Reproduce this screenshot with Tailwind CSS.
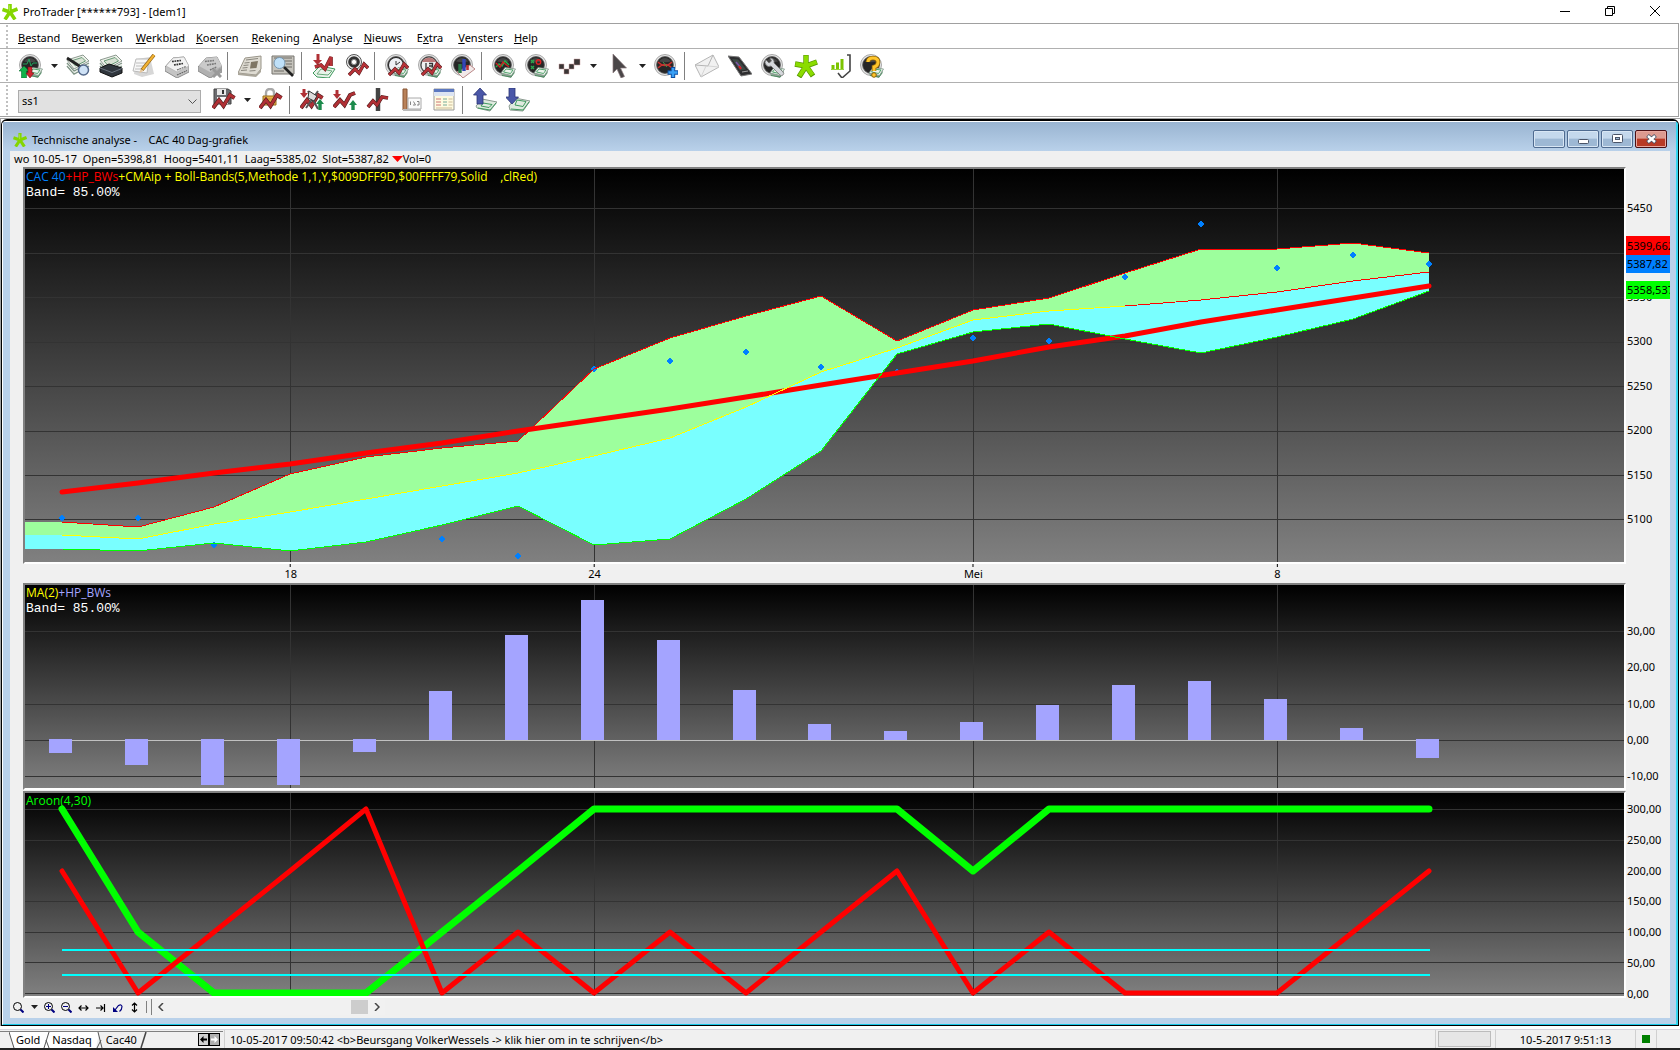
<!DOCTYPE html>
<html lang="nl">
<head>
<meta charset="utf-8">
<title>ProTrader [******793] - [dem1]</title>
<script src="https://cdn.jsdelivr.net/npm/@tailwindcss/browser@4"></script>
</head>
<body class="h-screen overflow-hidden bg-white font-['Noto_Sans','Open_Sans',sans-serif] text-[11px] leading-4 text-black">

<!-- shared icon parts -->
<svg class="hidden" aria-hidden="true">
  <symbol id="star" viewBox="0 0 16 16"><g stroke="#84d600" stroke-width="3.600" fill="none"><path d="M8 8V0M8 8L.5 5.500M8 8L3 15.500M8 8L13 15.500M8 8L15.500 5"/></g><path d="M7.500 1.500V7" stroke="#a8e840"/></symbol>
  <symbol id="orb" viewBox="0 0 24 24"><circle cx="11" cy="11" r="10.500" fill="#e4e4e4" stroke="#a8a8a8"/><circle cx="11" cy="11" r="8.400" fill="#262626" stroke="#555" stroke-width=".8"/><path d="M5 7.500a7 7 0 0 1 12 0q-5.500 1.500-12 0" fill="#454545"/></symbol>
  <symbol id="cash" viewBox="0 0 24 24"><path d="M9 21l4-6 10 2-4 7z" fill="#8fa596"/><path d="M9 19l4-5.500 10.500 1.500-4 6.500z" fill="#eef5ee" stroke="#7d9486" stroke-width=".8"/><path d="M11.500 18l2.500-3 7 1-2.500 3.500z" fill="none" stroke="#3f9a5e" stroke-width=".9"/><path d="M10 21.500l9 1.500 3.500-4.500" fill="none" stroke="#4b8a60"/></symbol>
  <symbol id="stack" viewBox="0 0 24 24"><path d="M1 6l16-5 6 6-15 8z" fill="#eef1ea" stroke="#8d9a90"/><path d="M5 7l11-3.500 3.500 3.500-10 5z" fill="#d9e2d4" stroke="#6a9a78"/><path d="M1 9l7 8 15-8M1 12l7 8 15-8" stroke="#7f9486" stroke-width="1.400" fill="none"/><path d="M1 10.500l7 8 15-8" stroke="#e6ece4" fill="none"/></symbol>
  <symbol id="zig" viewBox="0 0 24 24"><path d="M1 20l6-8 4.500 6L18 7l4.500 3" fill="none" stroke="#4a1a1a" stroke-width="4"/><path d="M1 20l6-8 4.500 6L18 7l4.500 3" fill="none" stroke="#b03035" stroke-width="2.800"/></symbol>
  <symbol id="zigs" viewBox="0 0 24 24"><path d="M4 21l6-6 4 4 5-9 4 4" fill="none" stroke="#531d1d" stroke-width="3.400"/><path d="M4 21l6-6 4 4 5-9 4 4" fill="none" stroke="#b83238" stroke-width="2.400"/></symbol>

  <symbol id="i-account" viewBox="0 0 24 24"><use href="#orb"/><path d="M4 10h4l2-5 2 7 2-3h4" stroke="#21a05c" fill="none"/><use href="#cash"/><path d="M5 12l5 5H7.500v7h-5v-7H0z" fill="#12b24a" stroke="#0a7030" stroke-width=".6"/><path d="M11 24l-4-5h2v-6h4v6h2z" fill="#d12430" stroke="#771018" stroke-width=".6"/></symbol>
  <symbol id="i-searchcash" viewBox="0 0 24 24"><use href="#stack"/><path d="M1 4l14 9" stroke="#222" stroke-width="2.800"/><circle cx="17.500" cy="16" r="5" fill="#cfe2f6" stroke="#53688a" stroke-width="1.500"/></symbol>
  <symbol id="i-case" viewBox="0 0 24 24"><use href="#stack"/><path d="M1 14l9-4 13 4v5l-10 4-12-5z" fill="#30363d" stroke="#111"/><path d="M1 14l12 4.500 10-4" stroke="#6c7580" fill="none"/></symbol>
  <symbol id="i-edit" viewBox="0 0 24 24"><path d="M2 20l2-15 14-2 4 17-12 3z" fill="#d7d7d7"/><path d="M1 17l3-12 13 0-2 14z" fill="#f7f7f7" stroke="#bbb"/><path d="M4 9h10M4 12h8M3 15h9" stroke="#bdbdbd"/><path d="M22 1L10 16" stroke="#8a5e14" stroke-width="3.600"/><path d="M22 1L10.500 15.500" stroke="#f2b233" stroke-width="2.200"/><path d="M7.500 19l1-4 3 2z" fill="#e8c79a"/></symbol>
  <symbol id="i-buysell" viewBox="0 0 24 24"><path d="M0 13l8-9 11-1 5 10v5l-12 6-12-7z" fill="#c4c4c4" stroke="#8c8c8c"/><path d="M1 12l7-8 11-1 5 9-12 6z" fill="#f2f2f2" stroke="#aaa" stroke-width=".6"/><path d="M7 7.500l9-1M9 11l9-1.500" stroke="#333" stroke-width="1.700" stroke-dasharray="1.800 .7"/><path d="M12 16l9-3.500M12 21l10-4.500" stroke="#666" stroke-width="1.200" stroke-dasharray="1.800 .7"/></symbol>
  <symbol id="i-buysellx" viewBox="0 0 24 24"><path d="M0 13l8-9 11-1 5 10v5l-12 6-12-7z" fill="#b0b0b0" stroke="#8c8c8c"/><path d="M1 12l7-8 11-1 5 9-12 6z" fill="#cacaca"/><path d="M7 7.500l9-1M9 11l9-1.500M12 16l7-3" stroke="#777" stroke-width="1.600" stroke-dasharray="1.800 .7"/><path d="M15 15l8 8M23 15l-8 8" stroke="#999" stroke-width="3"/></symbol>
  <symbol id="i-news" viewBox="0 0 24 24"><path d="M0 19l7-15 16-2v13l-5 6z" fill="#dedbd2" stroke="#989488"/><path d="M0 19l18 2 5-6v3l-5 5-18-2z" fill="#aaa69a"/><path d="M8 6l12-1.500M6.500 9l5-.5M5.500 11.500l5-.5M4.500 14l5-.5M3 16.500l6-.5" stroke="#8a877e"/><path d="M13 8l7-1-1.500 7-6.500.5z" fill="#7f7664"/><path d="M11.500 17l6-.5" stroke="#8a877e"/></symbol>
  <symbol id="i-newssearch" viewBox="0 0 24 24"><path d="M1 20V2h22v18z" fill="#c6c4bd" stroke="#77756f"/><path d="M3 4h18M14 7h7M15 10h6M15 13h6M3 17h10" stroke="#6f6d66"/><circle cx="8.500" cy="9" r="5.500" fill="#bfe0f8" stroke="#7795ad"/><path d="M13 13l9 9" stroke="#222" stroke-width="2.600"/></symbol>
  <symbol id="i-zigcash" viewBox="0 0 24 24"><path d="M1 19l7-7 15 3-6 9-12-1z" fill="#e9f3ea" stroke="#3f9a5e"/><path d="M5 20l4-5 11 2-4 4z" fill="none" stroke="#6aaa7c"/><path d="M6 0v7" stroke="#b03035" stroke-width="3"/><path d="M1 6h9l-4.500 5z" fill="#b03035"/><path d="M3 13l6-2 4 4 6-12v9" fill="none" stroke="#6a2020" stroke-width="3.600"/><path d="M3 13l6-2 4 4 6-12v9" fill="none" stroke="#b83238" stroke-width="2.600"/></symbol>
  <symbol id="i-speaker" viewBox="0 0 24 24"><circle cx="9" cy="8" r="7.500" fill="#eee" stroke="#555"/><circle cx="9" cy="8" r="5.800" fill="#333"/><circle cx="9" cy="8" r="2.600" fill="#fff" stroke="#888"/><use href="#zigs"/></symbol>
  <symbol id="i-clock" viewBox="0 0 24 24"><use href="#orb"/><circle cx="11" cy="11" r="7" fill="#eef0f4"/><path d="M11 11l4-3M11 11V7" stroke="#333"/><use href="#cash"/><use href="#zigs"/></symbol>
  <symbol id="i-date" viewBox="0 0 24 24"><use href="#orb"/><circle cx="11" cy="11" r="7.500" fill="#f0f0f0"/><path d="M4 8a8 8 0 0 1 14 0z" fill="#b87878"/><path d="M8 9v6M11 9.500h3.500v2.500h-3.500M14.500 9v6" stroke="#333" fill="none" stroke-width="1.300"/><use href="#cash"/><use href="#zigs"/></symbol>
  <symbol id="i-bars3d" viewBox="0 0 24 24"><use href="#orb"/><path d="M6 18l6 6 12-9-5-4z" fill="#f2e9e9" stroke="#b88"/><path d="M9 10v9" stroke="#2b7a49" stroke-width="3.400"/><path d="M13 5v12" stroke="#3346b8" stroke-width="3.400"/><path d="M16.500 11v5" stroke="#b83238" stroke-width="2.600"/></symbol>
  <symbol id="i-orbzig" viewBox="0 0 24 24"><use href="#orb"/><path d="M4 13l3-3 3 2 3-5 4 4" stroke="#24b24c" fill="none" stroke-width="1.400"/><path d="M4 9l4 4 3-5 6 5" stroke="#c22" fill="none" stroke-width="1.400"/><use href="#cash"/></symbol>
  <symbol id="i-orbdots" viewBox="0 0 24 24"><use href="#orb"/><circle cx="13.500" cy="8" r="2.200" fill="none" stroke="#d22" stroke-width="1.400"/><path d="M6 6l3 3M9 6L6 9M6 12l3 3M9 12l-3 3" stroke="#28a84e" stroke-width="1.400"/><use href="#cash"/></symbol>
  <symbol id="i-steps" viewBox="0 0 24 24"><g fill="#3a3535" stroke="#c9a0a0" stroke-width=".5"><path d="M1 10h5v5H1zM6 15h5v5H6zM11 10h5v5h-5zM16 5h6v6h-6z"/></g></symbol>
  <symbol id="i-cursor" viewBox="0 0 24 24"><path d="M6 0v19l4-4 4 9 3.500-1.500-4-8.500h6z" fill="#4a4648" stroke="#8d7d80" stroke-width=".7"/></symbol>
  <symbol id="i-orbplus" viewBox="0 0 24 24"><use href="#orb"/><path d="M4 8q7 7 14 0M4 14q7-7 14 0" stroke="#c8302f" fill="none" stroke-width="1.400"/><path d="M9 8l4 5" stroke="#3a9a50"/><path d="M19 13v11M13.500 18.500h11" stroke="#0d4ca0" stroke-width="4.400"/><path d="M19 14v9M14.500 18.500h9" stroke="#39a0f5" stroke-width="2.600"/></symbol>
  <symbol id="i-mail" viewBox="0 0 24 24"><path d="M0 11L18 1l6 12L6 23z" fill="#f1f1f1" stroke="#b5b5b5"/><path d="M0 11l13 1L18 1" fill="none" stroke="#b5b5b5"/><path d="M6 23l5-11M24 13l-11-1" stroke="#d5d5d5"/></symbol>
  <symbol id="i-phone" viewBox="0 0 24 24"><path d="M0 2l11 1 13 17-11 2z" fill="#2e2e30" stroke="#777"/><path d="M4 5l6 .5 8 10-6 1z" fill="#3d4a45"/><path d="M8 8l5 6" stroke="#7d55a8" stroke-width="1.500"/><path d="M11 12l2 3" stroke="#d22" stroke-width="2"/><path d="M14 18l6-1" stroke="#9c9c9c"/></symbol>
  <symbol id="i-tools" viewBox="0 0 24 24"><use href="#orb"/><use href="#cash"/><path d="M5 6a4 4 0 0 0 5 6l9 9a2 2 0 0 0 3-3l-9-9a4 4 0 0 0-4-5l1.500 3-2.500 2z" fill="#d5d8dc" stroke="#777" stroke-width=".8"/></symbol>
  <symbol id="i-bigstar" viewBox="0 0 24 24"><path d="M12 12V1M12 12L1 10M12 12L5 23M12 12l7 10M12 12l11-4" stroke="#5a9a00" stroke-width="5.400"/><path d="M12 12V1.500M12 12L1.500 10M12 12L5.500 22M12 12l6.500 9M12 12l10.500-4" stroke="#8bdc00" stroke-width="4"/></symbol>
  <symbol id="i-signal" viewBox="0 0 24 24"><path d="M20 1h3v16l-8 7M11 19l4 5" fill="none" stroke="#444" stroke-width="1.600"/><path d="M1 2h19v15H1z" fill="#fff"/><path d="M6 11v4M10.500 8.500V15M15 5v10" stroke="#7cc400" stroke-width="3"/><path d="M4 15.500h13" stroke="#9ad43c"/></symbol>
  <symbol id="i-help" viewBox="0 0 24 24"><use href="#orb"/><use href="#cash"/><path d="M8 8q0-4 5-4t5 4-4 5v4" fill="none" stroke="#8a6208" stroke-width="4.600"/><path d="M8 8q0-4 5-4t5 4-4 5v4" fill="none" stroke="#ffc52b" stroke-width="3"/><circle cx="14" cy="21" r="2.300" fill="#ffc52b" stroke="#8a6208"/></symbol>

  <symbol id="i-save" viewBox="0 0 24 24"><path d="M2 1h14l3 2v13H2z" fill="#6c6c70" stroke="#444"/><path d="M5 1h9v6H5z" fill="#e8e8e8"/><path d="M11 2v4" stroke="#333" stroke-width="2"/><path d="M5 9h11v7H5z" fill="#fafafa"/><use href="#zig"/></symbol>
  <symbol id="i-lock" viewBox="0 0 24 24"><path d="M7 9V5q0-4 4-4t4 4v4" fill="none" stroke="#a9a9a9" stroke-width="2.400"/><path d="M4 8h13v9H4z" fill="#e9b44c" stroke="#9a6c1a"/><path d="M5 11h11M5 14h11" stroke="#c98f2e"/><use href="#zig"/></symbol>
  <symbol id="i-zignet" viewBox="0 0 24 24"><path d="M4 1v6" stroke="#b03035" stroke-width="3"/><path d="M0 5h8l-4 5z" fill="#b03035"/><use href="#zig"/><path d="M8 3l10 18M18 3L6 20" stroke="#555" stroke-width="2"/><path d="M9 3l8 5-3 5-6-3z" fill="#ddd" stroke="#333"/><path d="M20 22v-8" stroke="#1c8a4c" stroke-width="3.400"/><path d="M16 16l4-5 4 5z" fill="#1c8a4c"/></symbol>
  <symbol id="i-zigupdn" viewBox="0 0 24 24"><path d="M4 2v5" stroke="#b03035" stroke-width="3"/><path d="M0 6h8l-4 5z" fill="#b03035"/><path d="M1 19l6-7 4.500 5L17 7l5-2" fill="none" stroke="#4a1a1a" stroke-width="4"/><path d="M1 19l6-7 4.500 5L17 7l5-2" fill="none" stroke="#b03035" stroke-width="2.800"/><path d="M20 22v-7" stroke="#1c8a4c" stroke-width="3.400"/><path d="M16 17l4-5 4 5z" fill="#1c8a4c"/></symbol>
  <symbol id="i-zigbar" viewBox="0 0 24 24"><path d="M12 0v23" stroke="#444" stroke-width="4.500"/><path d="M2 19l5-6 4 4 5-8 6 1" fill="none" stroke="#4a1a1a" stroke-width="3.600"/><path d="M2 19l5-6 4 4 5-8 6 1" fill="none" stroke="#b03035" stroke-width="2.600"/></symbol>
  <symbol id="i-scale" viewBox="0 0 24 24"><path d="M4 1h4v21H4z" fill="#b9825a" stroke="#875533"/><path d="M9 10h13v11H9z" fill="#fbfbfb" stroke="#aaa"/><path d="M4 21h18v2H4z" fill="#bbb"/><path d="M11.500 17v-3.500M14 17h2.500l-2-3.500M18 13.500h2V17h-2" stroke="#777" fill="none" stroke-width=".9"/></symbol>
  <symbol id="i-table" viewBox="0 0 24 24"><path d="M2 1h20v21H2z" fill="#fffbe0" stroke="#999"/><path d="M2 1h20v3H2z" fill="#5c78c0"/><path d="M2 4h20v4H2z" fill="#dce4f2"/><path d="M4 11h5M4 14h5M4 17h5" stroke="#c77"/><path d="M11 11h4M11 14h4M11 17h4" stroke="#7a9"/><path d="M16.500 11h4M16.500 14h4M16.500 17h4M4 20h16" stroke="#cb9"/></symbol>
  <symbol id="i-up" viewBox="0 0 24 24"><path d="M3 18l6-7 15 3-7 9-13-3z" fill="#dfeadf" stroke="#8a9a90"/><path d="M5 20l12 2 6-7M10 15l9 1.500-3 3-8-1.500z" fill="none" stroke="#3f9a5e"/><path d="M7 0l6.500 7H10v9H4V7H.5z" fill="#4a57a8" stroke="#2b3575" stroke-width=".8"/></symbol>
  <symbol id="i-down" viewBox="0 0 24 24"><path d="M3 18l6-8 15 3-7 10-13-1z" fill="#dfeadf" stroke="#8a9a90"/><path d="M5 21l12 1 6-8M11 12l9 1.500-3 5-8-1.500z" fill="none" stroke="#3f9a5e"/><path d="M3 0h6v9h3.500L6 16-.5 9H3z" fill="#4a57a8" stroke="#2b3575" stroke-width=".8"/></symbol>
  <symbol id="i-drop" viewBox="0 0 7 4"><path d="M0 0h7L3.500 4z" fill="#222"/></symbol>
</svg>

<div class="flex h-full flex-col">
  <!-- application title bar -->
  <header class="flex h-[23px] shrink-0 items-center pr-[2px] pl-[2px]">
    <svg class="size-4"><use href="#star"/></svg>
    <h1 class="ml-[5px]">ProTrader [******793] - [dem1]</h1>
    <div class="ml-auto flex pb-[2px]">
      <button class="grid w-[45px] place-items-center" aria-label="Minimaliseren"><svg class="h-4 w-[10px]" viewBox="0 0 10 16"><path d="M0 8.500h10" stroke="#000"/></svg></button>
      <button class="grid w-[45px] place-items-center" aria-label="Herstellen"><svg class="h-4 w-[10px]" viewBox="0 0 10 16"><path d="M.5 5.500h7v7h-7zM2.500 5V3.500h7v7H8" fill="none" stroke="#000"/></svg></button>
      <button class="grid w-[46px] place-items-center" aria-label="Sluiten"><svg class="h-4 w-[10px]" viewBox="0 0 10 16"><path d="M0 3l10 10M10 3L0 13" stroke="#000"/></svg></button>
    </div>
  </header>

  <div class="mr-px flex shrink-0 flex-col border-y border-r border-[#a0a0a0]">
    <nav class="flex h-[25px] items-center border-b border-[#b0b0b0] pl-[6px]">
      <span class="mr-[10px] h-[23px] border-l-2 border-dotted border-[#c0c0c0]"></span>
      <ul class="flex gap-[11px] pt-[3px]">
        <li><a href="#"><u>B</u>estand</a></li>
        <li><a href="#">B<u>e</u>werken</a></li>
        <li><a href="#" class="pl-[2px]"><u>W</u>erkblad</a></li>
        <li><a href="#"><u>K</u>oersen</a></li>
        <li><a href="#" class="pl-[2px]"><u>R</u>ekening</a></li>
        <li><a href="#" class="pl-[2px]"><u>A</u>nalyse</a></li>
        <li><a href="#"><u>N</u>ieuws</a></li>
        <li><a href="#" class="pl-[4px]">E<u>x</u>tra</a></li>
        <li><a href="#" class="pl-[4px]"><u>V</u>ensters</a></li>
        <li><a href="#"><u>H</u>elp</a></li>
      </ul>
    </nav>
    <div class="flex h-[34px] items-center border-b border-[#b0b0b0] pl-[6px]" role="toolbar" aria-label="Standaard">
      <span class="mr-[6px] h-[30px] border-l-2 border-dotted border-[#c0c0c0]"></span>
      <button class="grid w-[33px] place-items-center" aria-label="Rekening"><svg class="size-6"><use href="#i-account"/></svg></button>
      <button class="grid w-[14px] place-items-center" aria-label="Meer"><svg class="h-1 w-[7px]"><use href="#i-drop"/></svg></button>
      <button class="grid w-[33px] place-items-center" aria-label="Zoek order"><svg class="size-6"><use href="#i-searchcash"/></svg></button>
      <button class="grid w-[33px] place-items-center" aria-label="Portefeuille"><svg class="size-6"><use href="#i-case"/></svg></button>
      <button class="grid w-[33px] place-items-center" aria-label="Notities"><svg class="size-6"><use href="#i-edit"/></svg></button>
      <button class="grid w-[33px] place-items-center" aria-label="Order"><svg class="size-6"><use href="#i-buysell"/></svg></button>
      <button class="grid w-[33px] place-items-center" aria-label="Order annuleren"><svg class="size-6"><use href="#i-buysellx"/></svg></button>
      <span class="mr-[5px] ml-px h-[28px] w-px bg-[#808080]"></span>
      <button class="grid w-[33px] place-items-center" aria-label="Nieuws"><svg class="size-6"><use href="#i-news"/></svg></button>
      <button class="grid w-[33px] place-items-center" aria-label="Zoek nieuws"><svg class="size-6"><use href="#i-newssearch"/></svg></button>
      <span class="mr-[5px] ml-[2px] h-[28px] w-px bg-[#808080]"></span>
      <button class="grid w-[33px] place-items-center" aria-label="Koersen"><svg class="size-6"><use href="#i-zigcash"/></svg></button>
      <button class="grid w-[33px] place-items-center" aria-label="Alarm"><svg class="size-6"><use href="#i-speaker"/></svg></button>
      <span class="mr-[5px] ml-px h-[28px] w-px bg-[#808080]"></span>
      <button class="grid w-[33px] place-items-center" aria-label="Intraday"><svg class="size-6"><use href="#i-clock"/></svg></button>
      <button class="grid w-[33px] place-items-center" aria-label="Historie"><svg class="size-6"><use href="#i-date"/></svg></button>
      <button class="grid w-[33px] place-items-center" aria-label="Volume"><svg class="size-6"><use href="#i-bars3d"/></svg></button>
      <span class="mr-[5px] ml-[2px] h-[28px] w-px bg-[#808080]"></span>
      <button class="grid w-[33px] place-items-center" aria-label="Grafiek"><svg class="size-6"><use href="#i-orbzig"/></svg></button>
      <button class="grid w-[33px] place-items-center" aria-label="Point and figure"><svg class="size-6"><use href="#i-orbdots"/></svg></button>
      <button class="grid w-[33px] place-items-center" aria-label="Renko"><svg class="size-6"><use href="#i-steps"/></svg></button>
      <button class="grid w-[15px] place-items-center" aria-label="Meer"><svg class="h-1 w-[7px]"><use href="#i-drop"/></svg></button>
      <button class="ml-px grid w-[33px] place-items-center" aria-label="Aanwijzer"><svg class="size-6"><use href="#i-cursor"/></svg></button>
      <button class="grid w-[14px] place-items-center" aria-label="Meer"><svg class="h-1 w-[7px]"><use href="#i-drop"/></svg></button>
      <button class="grid w-[33px] place-items-center" aria-label="Indicator toevoegen"><svg class="size-6 overflow-visible"><use href="#i-orbplus"/></svg></button>
      <span class="mr-[5px] ml-[2px] h-[28px] w-px bg-[#808080]"></span>
      <button class="grid w-[33px] place-items-center" aria-label="Mail"><svg class="size-6"><use href="#i-mail"/></svg></button>
      <button class="grid w-[33px] place-items-center" aria-label="Telefoon"><svg class="size-6"><use href="#i-phone"/></svg></button>
      <button class="grid w-[33px] place-items-center" aria-label="Instellingen"><svg class="size-6"><use href="#i-tools"/></svg></button>
      <button class="grid w-[33px] place-items-center" aria-label="ProTrader"><svg class="size-6"><use href="#i-bigstar"/></svg></button>
      <button class="grid w-[33px] place-items-center" aria-label="Signalen"><svg class="size-6"><use href="#i-signal"/></svg></button>
      <button class="grid w-[33px] place-items-center" aria-label="Help"><svg class="size-6"><use href="#i-help"/></svg></button>
    </div>
    <div class="flex h-[33px] items-center pl-[6px]" role="toolbar" aria-label="Analyse">
      <span class="mr-[10px] h-[30px] border-l-2 border-dotted border-[#c0c0c0]"></span>
      <div class="relative mt-[3px] mr-[6px]">
        <select aria-label="Sjabloon" class="block h-[23px] w-[183px] appearance-none border border-[#acacac] bg-[#e1e1e1] pl-[3px]"><option>ss1</option></select>
        <svg class="pointer-events-none absolute top-[9px] right-[4px] h-[6px] w-[9px]" viewBox="0 0 9 6"><path d="M.5 .5l4 4 4-4" fill="none" stroke="#555"/></svg>
      </div>
      <button class="grid w-[33px] place-items-center" aria-label="Opslaan"><svg class="size-6"><use href="#i-save"/></svg></button>
      <button class="grid w-[14px] place-items-center" aria-label="Meer"><svg class="h-1 w-[7px]"><use href="#i-drop"/></svg></button>
      <button class="grid w-[33px] place-items-center" aria-label="Vergrendelen"><svg class="size-6"><use href="#i-lock"/></svg></button>
      <span class="mr-[5px] ml-[2px] h-[28px] w-px bg-[#808080]"></span>
      <button class="grid w-[33px] place-items-center" aria-label="Indicator instellen"><svg class="size-6"><use href="#i-zignet"/></svg></button>
      <button class="grid w-[33px] place-items-center" aria-label="Koop en verkoop"><svg class="size-6"><use href="#i-zigupdn"/></svg></button>
      <button class="grid w-[33px] place-items-center" aria-label="Crosshair"><svg class="size-6"><use href="#i-zigbar"/></svg></button>
      <button class="grid w-[33px] place-items-center" aria-label="Schaal"><svg class="size-6"><use href="#i-scale"/></svg></button>
      <button class="grid w-[33px] place-items-center" aria-label="Tabel"><svg class="size-6"><use href="#i-table"/></svg></button>
      <span class="mr-[5px] ml-[2px] h-[28px] w-px bg-[#808080]"></span>
      <button class="grid w-[33px] place-items-center" aria-label="Kopen"><svg class="size-6"><use href="#i-up"/></svg></button>
      <button class="grid w-[33px] place-items-center" aria-label="Verkopen"><svg class="size-6"><use href="#i-down"/></svg></button>
    </div>
  </div>

  <!-- chart window -->
  <main class="mt-px flex min-h-0 grow flex-col border-t border-l border-[#a0a0a0] pr-px">
    <section class="flex min-h-0 grow flex-col rounded-t-md border-x border-t-2 border-b border-black bg-[#b9d1ea]">
      <div class="flex min-h-0 grow flex-col rounded-t border-t border-r-2 border-b border-l border-t-white border-r-[#35d6f0] border-b-[#18c8e8] border-l-white">
        <div class="flex h-[29px] shrink-0 items-center bg-linear-to-b from-[#99b4d1] to-[#b9d1ea] pt-[6px] pr-[9px] pl-[10px]">
          <svg class="size-[14px]"><use href="#star"/></svg>
          <h2 class="ml-[5px] whitespace-pre">Technische analyse -    CAC 40 Dag-grafiek</h2>
          <div class="ml-auto flex gap-[2px] pb-px">
            <button aria-label="Extra" class="h-[18px] w-8 rounded-xs border border-[#4f6b90] bg-linear-to-b from-[#c4d8ec] from-45% to-[#9db8d4] to-50% shadow-[inset_0_0_0_1px_#d8e6f4]"></button>
            <button aria-label="Minimaliseren" class="grid h-[18px] w-8 place-items-center rounded-xs border border-[#4f6b90] bg-linear-to-b from-[#c4d8ec] from-45% to-[#9db8d4] to-50% shadow-[inset_0_0_0_1px_#d8e6f4]"><svg class="h-3 w-[11px]" viewBox="0 0 11 12"><rect x=".5" y="6.500" width="10" height="4" rx="1" fill="#fff" stroke="#4a5468"/></svg></button>
            <button aria-label="Maximaliseren" class="grid h-[18px] w-8 place-items-center rounded-xs border border-[#4f6b90] bg-linear-to-b from-[#c4d8ec] from-45% to-[#9db8d4] to-50% shadow-[inset_0_0_0_1px_#d8e6f4]"><svg class="h-3 w-[11px]" viewBox="0 0 11 12"><rect x=".5" y="1.500" width="10" height="8" rx="1" fill="#fff" stroke="#4a5468"/><rect x="3.500" y="4.500" width="4" height="2" fill="#9db8d4" stroke="#4a5468"/></svg></button>
            <button aria-label="Sluiten" class="grid h-[18px] w-8 place-items-center rounded-xs border border-[#4a0f14] bg-linear-to-b from-[#dc9a90] from-45% to-[#b83a26] to-50% shadow-[inset_0_0_0_1px_#e8a8a0]"><svg class="h-3 w-[11px]" viewBox="0 0 11 12"><path d="M1.500 2.500l8 7M9.500 2.500l-8 7" stroke="#4a5468" stroke-width="4"/><path d="M2 3l7 6M9 3L2 9" stroke="#fff" stroke-width="2.400"/></svg></button>
          </div>
        </div>

        <div class="mr-[6px] mb-[6px] ml-[7px] flex min-h-0 grow flex-col bg-[#f0f0f0]">
          <p class="flex h-4 shrink-0 items-center pl-1 whitespace-pre">wo 10-05-17  Open=5398,81  Hoog=5401,11  Laag=5385,02  Slot=5387,82 <svg class="h-[6px] w-[11px]" viewBox="0 0 11 6"><path d="M0 0h11L5.500 6z" fill="red"/></svg>Vol=0</p>

          <!-- price panel -->
          <div class="flex min-h-0 flex-[397] pl-[13px]">
            <div class="relative min-w-0 grow border-2 border-t-[#808080] border-r-white border-b-white border-l-[#808080] bg-linear-to-b/srgb from-black to-[#808080]">
              <svg class="absolute inset-0 size-full" viewBox="25 169 1599 393" preserveAspectRatio="none" role="img" aria-label="CAC 40 koersgrafiek">
                <path d="M25 208.500H1624M25 253.500H1624M25 297.500H1624M25 342.500H1624M25 386.500H1624M25 431.500H1624M25 475.500H1624M25 519.500H1624M290.500 169V562M594.500 169V562M973.500 169V562M1277.500 169V562" stroke="#333" shape-rendering="crispEdges"/>
                <path d="M25 522H62L138 527 214 507 290 474 366 457 442 448 518 441 594 369 670 338 746 316 821 296 897 341 973 310 1049 298 1125 273 1201 249 1277 249 1353 243 1429 253V272L1353 281 1277 292 1201 300 1125 306 1049 311 973 320 897 348 821 372 746 407 670 438 594 456 518 473 442 486 366 499 290 512 214 524 138 539 62 535H25z" fill="#9dff9d" shape-rendering="crispEdges"/>
                <path d="M25 535H62L138 539 214 524 290 512 366 499 442 486 518 473 594 456 670 438 746 407 821 372 897 348 973 320 1049 311 1125 306 1201 300 1277 292 1353 281 1429 272V291L1353 319 1277 337 1201 353 1125 339 1049 324 973 332 897 354 821 451 746 499 670 539 594 545 518 506 442 525 366 542 290 551 214 543 138 551 62 549H25z" fill="#79ffff" shape-rendering="crispEdges"/>
                <path d="M62 515l3 3-3 3-3-3zM138 515l3 3-3 3-3-3zM214 542l3 3-3 3-3-3zM442 536l3 3-3 3-3-3zM518 553l3 3-3 3-3-3zM594 366l3 3-3 3-3-3zM670 358l3 3-3 3-3-3zM746 349l3 3-3 3-3-3zM821 364l3 3-3 3-3-3zM897 369l2 2-2 2-2-2zM973 335l3 3-3 3-3-3zM1049 338l3 3-3 3-3-3zM1125 274l3 3-3 3-3-3zM1201 221l3 3-3 3-3-3zM1277 265l3 3-3 3-3-3zM1353 252l3 3-3 3-3-3zM1429 261l3 3-3 3-3-3z" fill="#0080ff" stroke="#0080ff"/>
                <path d="M62 492L138 483 214 473 290 464 366 453 442 443 518 431 594 420 670 409 746 397 821 385 897 373 973 361 1049 347 1125 336 1201 322 1277 310 1353 298 1429 286" fill="none" stroke="red" stroke-width="5" stroke-linecap="round" stroke-linejoin="round"/>
                <g fill="none" shape-rendering="crispEdges">
                  <path d="M62 522L138 527 214 507 290 474 366 457 442 448 518 441 594 369 670 338 746 316 821 296 897 341 973 310 1049 298 1125 273 1201 249 1277 249 1353 243 1429 253" stroke="red"/>
                  <path d="M62 535L138 539 214 524 290 512 366 499 442 486 518 473 594 456 670 438 746 407 821 372 897 348 973 320 1049 311 1125 306" stroke="#ff0"/>
                  <path d="M1125 306L1201 300 1277 292 1353 281 1429 272" stroke="red"/>
                  <path d="M62 549L138 551 214 543 290 551 366 542 442 525 518 506 594 545 670 539 746 499 821 451 897 354 973 332 1049 324 1125 339 1201 353 1277 337 1353 319 1429 291" stroke="lime"/>
                </g>
              </svg>
              <div class="absolute top-0 left-px">
                <p class="font-['Open_Sans',sans-serif] text-xs leading-4 whitespace-pre text-[#ff0]"><span class="text-[#0080ff]">CAC 40</span><span class="text-[#f00]">+HP_BWs</span>+CMAip + Boll-Bands(5,Methode 1,1,Y,$009DFF9D,$00FFFF79,Solid    ,clRed)</p>
                <p class="font-['Liberation_Mono',monospace] text-[13px] leading-4 text-white">Band= 85.00%</p>
              </div>
            </div>
            <div class="relative w-11 shrink-0 overflow-hidden pl-px">
              <ul class="flex h-full flex-col justify-between pt-[33px] pb-[37px]"><li>5450</li><li class="h-4"></li><li>5350</li><li>5300</li><li>5250</li><li>5200</li><li>5150</li><li>5100</li></ul>
              <div class="absolute inset-x-0 top-[69px]">
                <p class="h-[19px] bg-[#f00] pt-[2px] pl-px">5399,662</p>
                <p class="h-[18px] bg-[#0080ff] pt-px pl-px">5387,82</p>
                <p class="mt-2 h-[18px] bg-[#0f0] pt-px pl-px">5358,537</p>
              </div>
            </div>
          </div>

          <!-- time axis -->
          <div class="relative mr-11 ml-[13px] h-[19px] shrink-0">
            <div class="absolute flex -translate-x-1/2 flex-col items-center leading-[14px]" style="left:16.700%"><span class="h-[3px] w-px bg-black"></span>18</div>
            <div class="absolute flex -translate-x-1/2 flex-col items-center leading-[14px]" style="left:35.650%"><span class="h-[3px] w-px bg-black"></span>24</div>
            <div class="absolute flex -translate-x-1/2 flex-col items-center leading-[14px]" style="left:59.290%"><span class="h-[3px] w-px bg-black"></span>Mei</div>
            <div class="absolute flex -translate-x-1/2 flex-col items-center leading-[14px]" style="left:78.260%"><span class="h-[3px] w-px bg-black"></span>8</div>
          </div>

          <!-- momentum panel -->
          <div class="flex min-h-0 flex-[207] pl-[13px]">
            <div class="relative min-w-0 grow border-2 border-t-[#808080] border-r-white border-b-white border-l-[#808080] bg-linear-to-b/srgb from-black to-[#808080]">
              <svg class="absolute inset-0 size-full" viewBox="25 585 1599 203" preserveAspectRatio="none" role="img" aria-label="MA(2) histogram" shape-rendering="crispEdges">
                <path d="M25 631.500H1624M25 704.500H1624M25 740.500H1624M25 776.500H1624M290.500 585V788M594.500 585V788M973.500 585V788M1277.500 585V788" stroke="#333"/>
                <path d="M60 740.500H1428" stroke="#c0c0c0"/>
                <path d="M49 739h23v14h-23zM125 739h23v26h-23zM201 739h23v46h-23zM277 739h23v46h-23zM353 739h23v13h-23zM429 691h23v49h-23zM505 635h23v105h-23zM581 600h23v140h-23zM657 640h23v100h-23zM733 690h23v50h-23zM808 724h23v16h-23zM884 731h23v9h-23zM960 722h23v18h-23zM1036 705h23v35h-23zM1112 685h23v55h-23zM1188 681h23v59h-23zM1264 699h23v41h-23zM1340 728h23v12h-23zM1416 739h23v19h-23z" fill="#a4a4ff"/>
              </svg>
              <div class="absolute top-0 left-px">
                <p class="font-['Open_Sans',sans-serif] text-xs leading-4 text-[#a4a4ff]"><span class="text-[#ff0]">MA(2)</span>+HP_BWs</p>
                <p class="font-['Liberation_Mono',monospace] text-[13px] leading-4 text-white">Band= 85.00%</p>
              </div>
            </div>
            <ul class="flex w-11 shrink-0 flex-col justify-between pt-10 pb-[6px] pl-px"><li>30,00</li><li>20,00</li><li>10,00</li><li>0,00</li><li>-10,00</li></ul>
          </div>

          <!-- aroon panel -->
          <div class="mt-px flex min-h-0 flex-[207] pl-[13px]">
            <div class="relative min-w-0 grow border-2 border-t-[#808080] border-r-white border-b-white border-l-[#808080] bg-linear-to-b/srgb from-black to-[#808080]">
              <svg class="absolute inset-0 size-full" viewBox="25 793 1599 203" preserveAspectRatio="none" role="img" aria-label="Aroon grafiek">
                <path d="M25 809.500H1624M25 840.500H1624M25 901.500H1624M25 932.500H1624M25 962.500H1624M25 993.500H1624M290.500 793V996M594.500 793V996M973.500 793V996M1277.500 793V996" stroke="#333" shape-rendering="crispEdges"/>
                <path d="M62 809L138 932 214 993H366L442 932 518 871 594 809H897L973 871 1049 809H1429" fill="none" stroke="lime" stroke-width="7" stroke-linecap="round" stroke-linejoin="round"/>
                <path d="M62 871L138 993 214 932 290 871 366 809 442 993 518 932 594 993 670 932 746 993 821 932 897 871 973 993 1049 932 1125 993H1277L1353 932 1429 871" fill="none" stroke="red" stroke-width="5" stroke-linecap="round" stroke-linejoin="round"/>
                <path d="M62 950H1430M62 975H1430" stroke="cyan" stroke-width="2" shape-rendering="crispEdges"/>
              </svg>
              <p class="absolute top-0 left-px font-['Open_Sans',sans-serif] text-xs leading-4 text-[#0f0]">Aroon(4,30)</p>
            </div>
            <ul class="mt-[10px] -mb-[6px] flex w-11 shrink-0 flex-col justify-between pb-[2px] pl-px"><li>300,00</li><li>250,00</li><li>200,00</li><li>150,00</li><li>100,00</li><li>50,00</li><li>0,00</li></ul>
          </div>

          <!-- zoom bar -->
          <div class="flex h-5 shrink-0 items-center pb-[2px]">
            <button class="grid w-[17px] place-items-center" aria-label="Zoom"><svg class="size-[11px]" viewBox="0 0 11 11"><circle cx="4.500" cy="4.500" r="4" fill="none" stroke="#000"/><path d="M7.500 7.500l3 3" stroke="#000080" stroke-width="2"/></svg></button>
            <button class="grid w-[14px] place-items-center" aria-label="Zoomopties"><svg class="h-1 w-[7px]"><use href="#i-drop"/></svg></button>
            <button class="grid w-[17px] place-items-center" aria-label="Inzoomen"><svg class="size-[11px]" viewBox="0 0 11 11"><circle cx="4.500" cy="4.500" r="4" fill="none" stroke="#000"/><path d="M2 4.500h5M4.500 2v5" stroke="#000080"/><path d="M7.500 7.500l3 3" stroke="#000080" stroke-width="2"/></svg></button>
            <button class="grid w-[17px] place-items-center" aria-label="Uitzoomen"><svg class="size-[11px]" viewBox="0 0 11 11"><circle cx="4.500" cy="4.500" r="4" fill="none" stroke="#000"/><path d="M2 4.500h5" stroke="#000080"/><path d="M7.500 7.500l3 3" stroke="#000080" stroke-width="2"/></svg></button>
            <button class="grid w-[17px] place-items-center" aria-label="Breedte"><svg class="size-[11px]" viewBox="0 0 11 11"><path d="M1 6h9M3.500 3.500L1 6l2.500 2.500M7.500 3.500L10 6 7.500 8.500" fill="none" stroke="#000" stroke-width="1.200"/></svg></button>
            <button class="grid w-[17px] place-items-center" aria-label="Naar einde"><svg class="size-[11px]" viewBox="0 0 11 11"><path d="M1 6h7M5.500 3.500L8 6 5.500 8.500M9.500 2v8" fill="none" stroke="#000" stroke-width="1.200"/></svg></button>
            <button class="grid w-[17px] place-items-center" aria-label="Ongedaan maken"><svg class="size-[11px]" viewBox="0 0 11 11"><path d="M1 5v5h5z" fill="#000080"/><path d="M3 8l3.500-4.500q3-1.500 3.500 1 0 3-2.500 5" fill="none" stroke="#000080" stroke-width="1.200"/></svg></button>
            <button class="grid w-[17px] place-items-center" aria-label="Hoogte"><svg class="size-[11px]" viewBox="0 0 11 11"><path d="M5.500 1v9M3 3.500L5.500 1 8 3.500M3 7.500L5.500 10 8 7.500" fill="none" stroke="#000" stroke-width="1.200"/></svg></button>
            <span class="ml-[3px] h-3 w-px bg-[#808080]"></span>
            <div class="ml-1 flex h-4 w-[234px] items-center border-l border-[#808080] bg-[#f1f1f1]" role="scrollbar" aria-label="Tijd" aria-valuenow="100">
              <button class="grid w-[17px] place-items-center" aria-label="Naar links"><svg class="h-2 w-[6px]" viewBox="0 0 6 8"><path d="M5 0L1 4l4 4" fill="none" stroke="#444" stroke-width="1.500"/></svg></button>
              <span class="ml-auto h-[14px] w-[17px] bg-[#cdcdcd]"></span>
              <button class="grid w-[17px] place-items-center" aria-label="Naar rechts"><svg class="h-2 w-[6px]" viewBox="0 0 6 8"><path d="M1 0l4 4-4 4" fill="none" stroke="#444" stroke-width="1.500"/></svg></button>
            </div>
          </div>
        </div>
      </div>
    </section>
  </main>

  <!-- status bar -->
  <footer class="mt-[3px] flex h-[21px] shrink-0 items-stretch border-t border-b-2 border-t-[#d8d4dc] border-b-[#222] bg-[#f0f0f0]">
    <div class="mt-px flex w-[223px] items-stretch border-t border-[#808080] pl-[9px]">
      <svg class="h-4 w-[7px]" viewBox="0 0 7 16"><path d="M0 0l5 16h2V0z" fill="#fff"/><path d="M0 0l5 16" stroke="#555" fill="none"/></svg>
      <a href="#" class="h-4 bg-white">Gold</a>
      <svg class="h-4 w-3" viewBox="0 0 12 16"><path d="M0 0h12v16H0z" fill="#fff"/><path d="M9 0L4 16M6 8l3 8" stroke="#555" fill="none"/></svg>
      <a href="#" class="h-4 bg-white">Nasdaq</a>
      <svg class="h-4 w-[14px]" viewBox="0 0 14 16"><path d="M0 0h7L4 16H0z" fill="#fff"/><path d="M9 8L5 16M6 0l4 16" stroke="#555" fill="none"/></svg>
      <a href="#" class="h-4">Cac40</a>
      <svg class="h-4 w-3" viewBox="0 0 12 16"><path d="M9 0L4 16" stroke="#444" stroke-width="1.500" fill="none"/></svg>
      <div class="mt-px mr-[3px] ml-auto flex h-[13px]">
        <button class="grid w-[11px] place-items-center border border-black bg-[#d0d0d0]" aria-label="Vorige"><svg class="size-[7px]" viewBox="0 0 7 7"><path d="M0 3.500L3.500 0v2.500H7v2H3.500V7z"/></svg></button>
        <button class="grid w-[11px] place-items-center border border-black bg-[#b0b0b0]" aria-label="Volgende"><svg class="size-[7px]" viewBox="0 0 7 7"><path d="M7 3.500L3.500 0v2.500H0v2h3.500V7z" fill="#fff"/></svg></button>
      </div>
    </div>
    <p class="ml-px grow border-l border-[#d0d0d0] pt-[2px] pl-[5px]">10-05-2017 09:50:42 &lt;b&gt;Beursgang VolkerWessels -&gt; klik hier om in te schrijven&lt;/b&gt;</p>
    <div class="flex w-[60px] items-center border-l border-[#d0d0d0] pl-[2px]"><span class="h-4 w-[53px] border border-[#bcbcbc] bg-[#e6e6e6]"></span></div>
    <p class="w-[140px] border-l border-[#d0d0d0] pt-[2px] text-center">10-5-2017 9:51:13</p>
    <div class="flex w-[22px] items-center border-x border-[#d0d0d0] pl-[6px]"><span class="size-2 bg-[#008000]"></span></div>
    <div class="w-[23px]"></div>
  </footer>
</div>
</body>
</html>
